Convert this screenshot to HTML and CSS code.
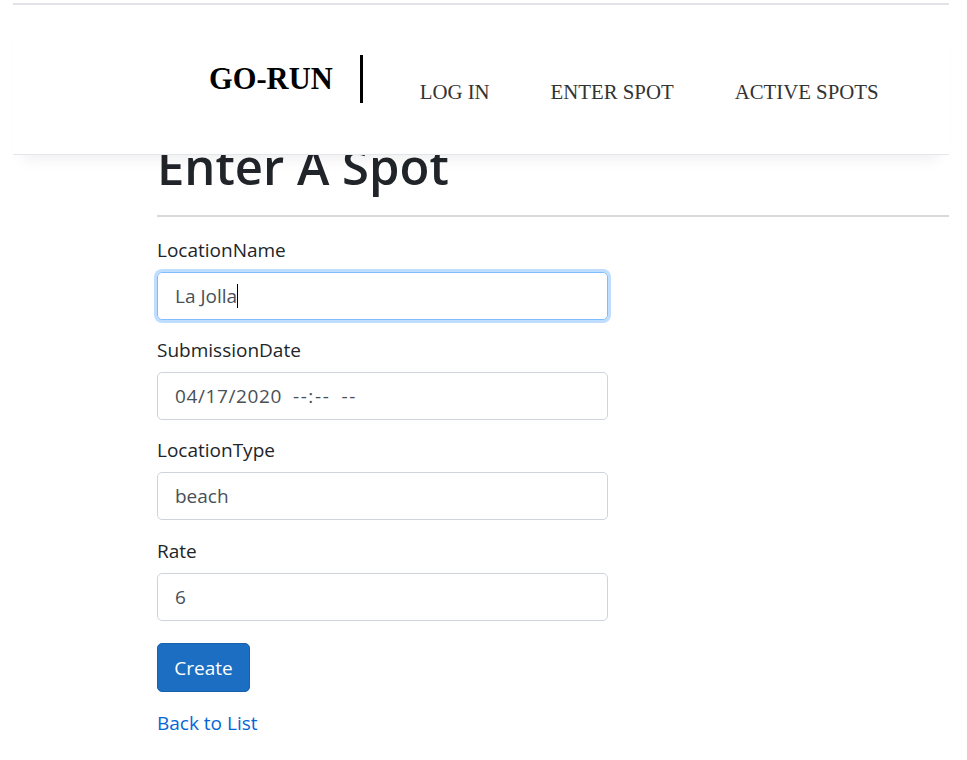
FILE: index.html
```html
<!DOCTYPE html>
<html>
<head>
<meta charset="utf-8">
<link rel="stylesheet" href="styles.css">
</head>
<body>
<div class="page">
  <header class="site-header">
    <nav class="nav">
      <a class="brand" href="#">GO-RUN</a>
      <span class="divider"></span>
      <ul class="links">
        <li><a href="#">LOG IN</a></li>
        <li><a href="#">ENTER SPOT</a></li>
        <li><a href="#">ACTIVE SPOTS</a></li>
      </ul>
    </nav>
  </header>
  <main class="content">
    <h1 class="title">Enter A Spot</h1>
    <hr class="rule">
    <form class="form">
      <div class="group">
        <label class="label">LocationName</label>
        <div class="input focused">La Jolla<span class="caret"></span></div>
      </div>
      <div class="group">
        <label class="label">SubmissionDate</label>
        <div class="input date">04/17/2020&nbsp; <span class="time">--:--</span> &nbsp;<span class="time">--</span></div>
      </div>
      <div class="group">
        <label class="label">LocationType</label>
        <div class="input">beach</div>
      </div>
      <div class="group">
        <label class="label">Rate</label>
        <div class="input">6</div>
      </div>
      <button class="btn" type="button">Create</button>
    </form>
    <a class="back" href="#">Back to List</a>
  </main>
</div>
</body>
</html>
```
FILE: styles.css
```css
html, body {
  margin: 0;
  padding: 0;
  background: #fff;
}
.page {
  margin-left: 13px;
  width: 936px;
  margin-top: 3px;
  border-top: 2px solid #e2e2e8;
}
.site-header {
  position: relative;
  z-index: 2;
  height: 149px;
  background: #fff;
  border-bottom: 1px solid #e3e6ea;
  box-shadow: 0 14px 14px -10px rgba(0,0,0,0.07);
}
.nav {
  display: flex;
  align-items: flex-start;
  padding-left: 196px;
  padding-top: 50px;
}
.brand {
  font-family: "Liberation Serif", "Times New Roman", serif;
  font-weight: bold;
  font-size: 30.5px;
  color: #000;
  text-decoration: none;
  line-height: 40px;
  margin-top: 4px;
}
.divider {
  display: block;
  width: 3px;
  height: 48px;
  background: #000;
  margin-left: 27px;
}
.links {
  list-style: none;
  display: flex;
  margin: 0;
  padding: 0;
  margin-left: 57px;
  gap: 61px;
}
.links a {
  font-family: "Liberation Serif", "Times New Roman", serif;
  font-size: 20.8px;
  color: #333;
  text-decoration: none;
  line-height: 24px;
  display: block;
  margin-top: 25px;
}
.content {
  padding-left: 144px;
  font-family: "Open Sans", "Noto Sans", sans-serif;
  color: #212529;
}
.title {
  font-family: "Open Sans", "Noto Sans", sans-serif;
  font-weight: 600;
  font-size: 49px;
  line-height: 60px;
  margin: -19px 0 0 0;
  color: #212529;
  position: relative;
  z-index: 1;
}
.rule {
  margin: 19px 0 0 0;
  border: 0;
  border-top: 2px solid #d9d9d9;
}
.form {
  margin-top: 19px;
}
.group {
  margin-bottom: 16px;
}
.group:nth-child(3) {
  margin-bottom: 17px;
}
.label {
  display: block;
  font-size: 19px;
  line-height: 29px;
  margin-bottom: 7px;
}
.input {
  box-sizing: border-box;
  width: 451px;
  height: 48px;
  border: 1px solid #ced4da;
  border-radius: 5px;
  padding: 0 17px;
  font-size: 19px;
  line-height: 46px;
  color: #495057;
  white-space: pre;
}
.input.date {
  letter-spacing: 0.6px;
}
.time {
  letter-spacing: 1.6px;
}
.input.focused {
  border-color: #80bdff;
  box-shadow: 0 0 0 3px rgba(0,123,255,0.25);
}
.caret {
  display: inline-block;
  width: 1px;
  height: 24px;
  background: #000;
  vertical-align: -5px;
}
.btn {
  display: block;
  margin-top: 22px;
  width: 93px;
  height: 49px;
  background: #1b6ec2;
  border: 1px solid #1861ac;
  border-radius: 5px;
  color: #fff;
  font-family: "Open Sans", "Noto Sans", sans-serif;
  font-size: 19px;
  padding: 0;
}
.back {
  display: inline-block;
  margin-top: 17px;
  font-size: 19px;
  line-height: 28px;
  color: #0366d6;
  text-decoration: none;
}
```
